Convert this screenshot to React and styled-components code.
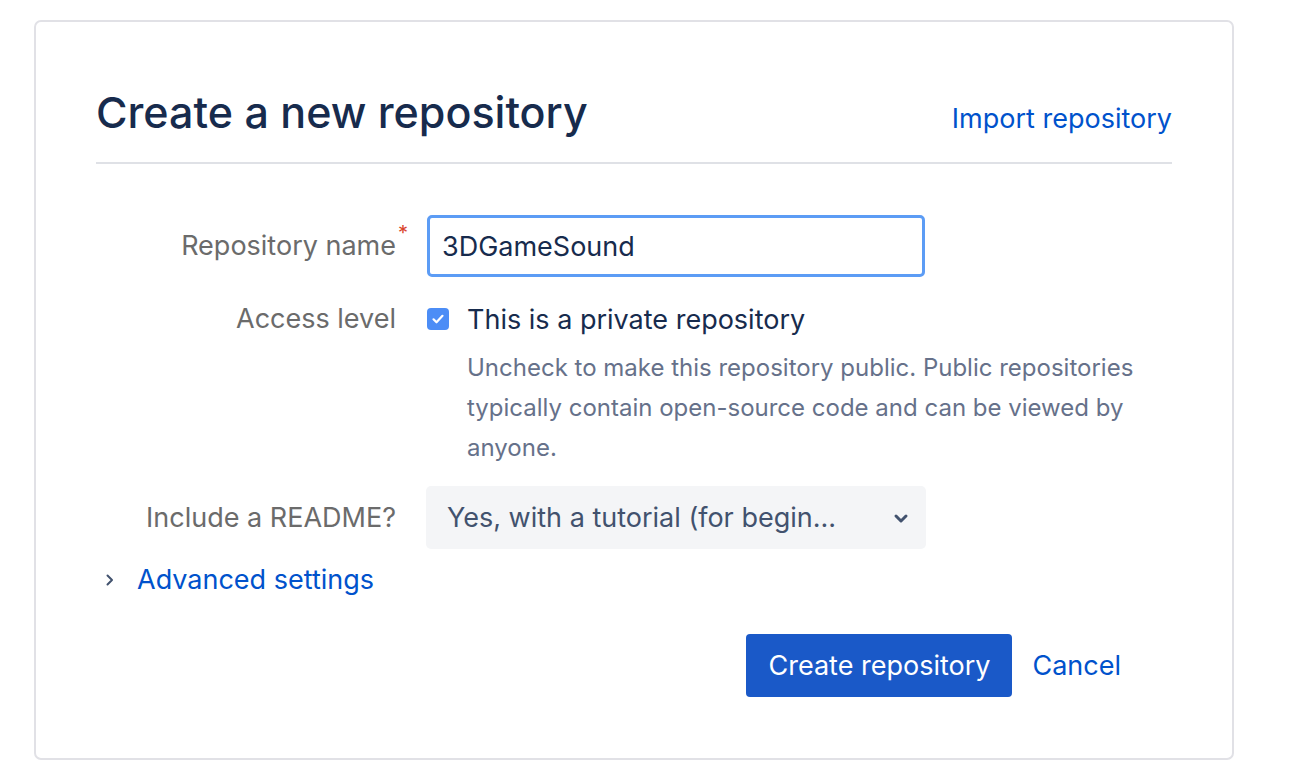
import React from "react";
import styled, { createGlobalStyle } from "styled-components";

const GlobalStyle = createGlobalStyle`
  body {
    margin: 0;
    background: #fff;
    font-family: Inter, "Liberation Sans", sans-serif;
  }
`;

const App = () => {
  return (
    <Page>
      <GlobalStyle />
      <Card>
        <Header>
          <Title>Create a new repository</Title>
          <LinkText href="#">Import repository</LinkText>
        </Header>
        <Form>
          <Field>
            <Label h="62px">
              Repository name<Required>*</Required>
            </Label>
            <TextInput defaultValue="3DGameSound" />
          </Field>

          <Field gap="28px">
            <Label h="28px">Access level</Label>
            <div>
              <CheckRow>
                <Checkbox>
                  <svg width="18" height="18" viewBox="0 0 18 18">
                    <path d="M4.5 9.3l3 3L13.5 5.8" fill="none" stroke="#fff" strokeWidth="2.2" strokeLinecap="round" strokeLinejoin="round" />
                  </svg>
                </Checkbox>
                <CheckText>This is a private repository</CheckText>
              </CheckRow>
              <Help>
                Uncheck to make this repository public. Public repositories typically contain open-source code and can be viewed by anyone.
              </Help>
            </div>
          </Field>

          <Field gap="18px">
            <Label h="63px">Include a README?</Label>
            <Select>
              <span>Yes, with a tutorial (for begin...</span>
              <svg width="18" height="18" viewBox="0 0 18 18">
                <path d="M4 7l5 5 5-5" fill="none" stroke="#42526e" strokeWidth="3" strokeLinecap="round" strokeLinejoin="round" />
              </svg>
            </Select>
          </Field>
        </Form>
        <Advanced>
          <svg width="12" height="14" viewBox="0 0 12 14">
            <path d="M3.5 2.5l4.5 4.5-4.5 4.5" fill="none" stroke="#42526e" strokeWidth="2" strokeLinecap="round" strokeLinejoin="round" />
          </svg>
          <LinkText href="#">Advanced settings</LinkText>
        </Advanced>
        <Actions>
          <PrimaryButton>Create repository</PrimaryButton>
          <LinkText href="#">Cancel</LinkText>
        </Actions>
      </Card>
    </Page>
  );
};

export default App;

const Page = styled.div`
  padding: 20px 56px 0 34px;
`;

const Card = styled.div`
  box-sizing: border-box;
  height: 740px;
  border: 2px solid #e1e1e6;
  border-radius: 7px;
  padding: 0 60px;
`;

const Header = styled.div`
  display: flex;
  justify-content: space-between;
  align-items: baseline;
  height: 142px;
  padding-top: 64px;
  box-sizing: border-box;
  border-bottom: 2px solid #dfe1e6;
`;

const Title = styled.h1`
  margin: 0;
  font-size: 43px;
  font-weight: 500;
  color: #172b4d;
  line-height: 52px;
`;

const LinkText = styled.a`
  color: #0052cc;
  font-size: 27px;
  text-decoration: none;
  line-height: 32px;
`;

const Form = styled.div`
  display: flex;
  flex-direction: column;
  margin-top: 51px;
`;

const Field = styled.div`
  display: grid;
  grid-template-columns: 300px 500px;
  column-gap: 31px;
  align-items: start;
  margin-top: ${(p) => p.gap || "0"};
`;

const Label = styled.div`
  position: relative;
  text-align: right;
  font-size: 27px;
  color: #6b6b6b;
  line-height: ${(p) => p.h};
  height: ${(p) => p.h};
`;

const Required = styled.span`
  position: absolute;
  top: 8px;
  right: -12px;
  color: #d9442e;
  font-size: 20px;
  line-height: 20px;
`;

const TextInput = styled.input`
  box-sizing: border-box;
  width: 498px;
  height: 62px;
  border: 3px solid #5c9cf5;
  border-radius: 5px;
  padding: 0 12px;
  font-family: inherit;
  font-size: 27px;
  color: #172b4d;
  outline: none;
`;

const CheckRow = styled.div`
  display: flex;
  align-items: center;
  gap: 18px;
  height: 28px;
`;

const Checkbox = styled.span`
  width: 22px;
  height: 22px;
  border-radius: 4px;
  background: #4c8df6;
  display: flex;
  align-items: center;
  justify-content: center;
`;

const CheckText = styled.span`
  font-size: 27px;
  color: #172b4d;
`;

const Help = styled.p`
  margin: 15px 0 0 40px;
  width: 690px;
  font-size: 24px;
  line-height: 40px;
  color: #66718a;
`;

const Select = styled.div`
  box-sizing: border-box;
  width: 500px;
  height: 63px;
  margin-left: -1px;
  background: #f4f5f7;
  border-radius: 5px;
  display: flex;
  align-items: center;
  justify-content: space-between;
  padding: 0 16px 0 21px;
  font-size: 27px;
  color: #42526e;
`;

const Advanced = styled.div`
  display: flex;
  align-items: center;
  gap: 21px;
  margin: 15px 0 0 8px;
`;

const Actions = styled.div`
  display: flex;
  align-items: center;
  justify-content: flex-end;
  gap: 20px;
  margin-top: 38px;
  padding-right: 51px;
`;

const PrimaryButton = styled.button`
  height: 63px;
  width: 266px;
  border: none;
  border-radius: 4px;
  background: #1a59c8;
  color: #fff;
  font-family: inherit;
  font-size: 27px;
`;
